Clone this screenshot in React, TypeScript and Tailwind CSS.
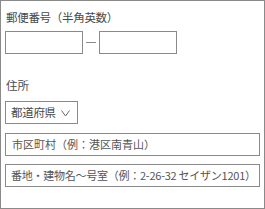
import React from "react";

const font = { fontFamily: '"Noto Sans CJK JP", "Noto Sans", sans-serif' };

export default function App() {
  return (
    <div
      style={font}
      className="w-[265px] h-[209px] border border-[#8a8a8a] bg-white pl-[4px] text-[#4a4a4a] flex flex-col"
    >
      <div className="mt-[8px] h-[16px] leading-[16px] text-[11.5px] tracking-[-0.3px] pl-[1px]">郵便番号（半角英数）</div>
      <div className="mt-[6px] flex items-center">
        <div className="w-[78px] h-[23px] border border-[#8a8a8a]" />
        <div className="mx-[3px] w-[10px] h-px bg-[#8a8a8a]" />
        <div className="w-[78px] h-[23px] border border-[#8a8a8a]" />
      </div>
      <div className="mt-[23px] h-[16px] leading-[16px] text-[11.5px] pl-[1px]">住所</div>
      <div className="mt-[8px] w-[73px] h-[23px] border border-[#8a8a8a] flex items-center pl-[5px] text-[11.5px] tracking-[-0.3px]">
        <span>都道府県</span>
        <svg width="9" height="7" viewBox="0 0 9 7" className="ml-[5px] mt-[1px]">
          <polyline points="0.5,0.5 4.5,6 8.5,0.5" fill="none" stroke="#666" strokeWidth="1" />
        </svg>
      </div>
      <div className="mt-[9px] w-[255px] h-[23px] border border-[#8a8a8a] flex items-center pl-[6px] text-[11px] text-[#555]">
        市区町村（例：港区南青山）
      </div>
      <div className="mt-[8px] w-[255px] h-[23px] border border-[#8a8a8a] flex items-center pl-[5px] text-[11px] text-[#555] whitespace-nowrap tracking-[-0.25px]">
        番地・建物名〜号室（例：2-26-32 セイザン1201）
      </div>
    </div>
  );
}
